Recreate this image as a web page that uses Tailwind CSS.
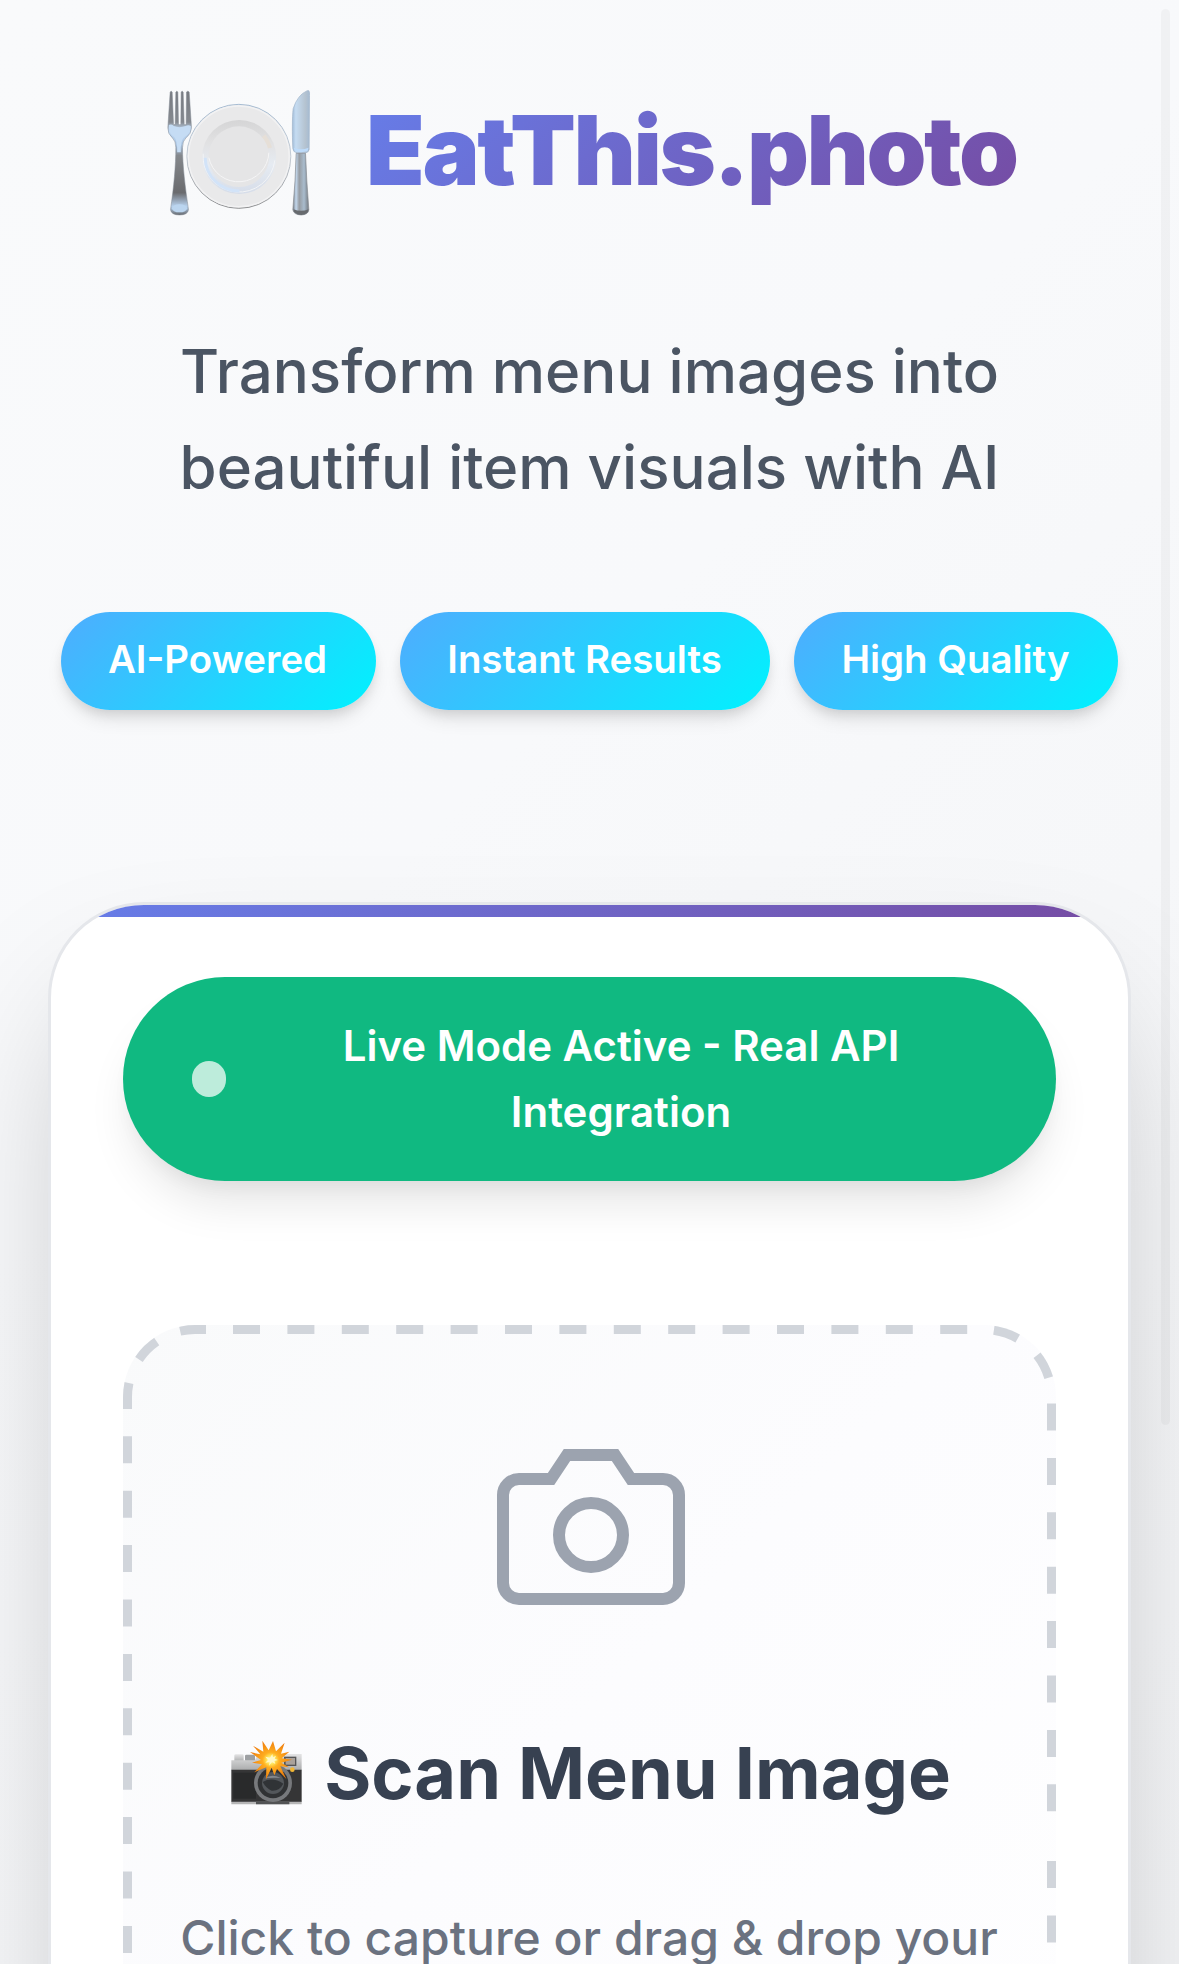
<!DOCTYPE html>
<html lang="en">
<head>
    <meta charset="utf-8"/>
    <meta content="width=device-width, initial-scale=1.0" name="viewport"/>
    <title>EatThis.photo</title>
    <script src="https://cdn.jsdelivr.net/npm/@tailwindcss/browser@4"></script>
</head>
<body class="h-[1964px] overflow-hidden font-['Inter',sans-serif] bg-[linear-gradient(135deg,#f9fafb_0%,#f8f9fb_40%,#f3f4f6_100%)]">
    <div class="h-[1964px] overflow-hidden px-12">
        <!-- Header -->
        <header class="h-[902px] pt-[87px] text-center">
            <div class="flex h-[130px] items-start pl-[118px]">
                <svg class="h-[130px] w-[147px] shrink-0" viewBox="80 50 440 390">
                    <defs>
                        <linearGradient id="fork" x1="0" y1="0" x2="0" y2="1">
                            <stop offset="0" stop-color="#777a80"/>
                            <stop offset=".25" stop-color="#85898f"/>
                            <stop offset=".32" stop-color="#c3dbf5"/>
                            <stop offset=".43" stop-color="#a9c4e2"/>
                            <stop offset=".52" stop-color="#85888c"/>
                            <stop offset=".82" stop-color="#6a6b6e"/>
                            <stop offset=".93" stop-color="#b8d2ee"/>
                            <stop offset="1" stop-color="#66696e"/>
                        </linearGradient>
                        <linearGradient id="blade" x1="0" y1="0" x2="1" y2="0">
                            <stop offset="0" stop-color="#a3bdd8"/>
                            <stop offset=".2" stop-color="#c5dcf2"/>
                            <stop offset=".75" stop-color="#b5c3d0"/>
                            <stop offset="1" stop-color="#a5bbd2"/>
                        </linearGradient>
                        <linearGradient id="handle" x1="0" y1="0" x2="1" y2="0">
                            <stop offset="0" stop-color="#777c83"/>
                            <stop offset=".2" stop-color="#c3d8ed"/>
                            <stop offset=".4" stop-color="#979ca2"/>
                            <stop offset=".7" stop-color="#a9bccd"/>
                            <stop offset="1" stop-color="#74797f"/>
                        </linearGradient>
                        <linearGradient id="rim" x1="0" y1="0" x2="0" y2="1">
                            <stop offset="0" stop-color="#d5d5d6"/>
                            <stop offset=".3" stop-color="#e1e1e2"/>
                            <stop offset=".6" stop-color="#e6ebf2"/>
                            <stop offset="1" stop-color="#d6dde9"/>
                        </linearGradient>
                        <linearGradient id="edge" x1="0" y1="0" x2="0" y2="1">
                            <stop offset="0" stop-color="#a5bbd2"/>
                            <stop offset=".5" stop-color="#c3cbd4"/>
                            <stop offset="1" stop-color="#8f9092"/>
                        </linearGradient>
                    </defs>
                    <path fill="url(#fork)" stroke="#808993" stroke-width="1.5" d="M92 65Q95 60 98 65L102 160Q103 168 107 160L109 65Q112 60 115 65L117 160Q120 168 124 160L125 65Q128 60 131 65L134 160Q138 168 140 160L141 65Q145 60 149 65L156 172Q156 190 139 203Q129 212 129 232C129 285 137 350 147 418Q145 434 120 434Q95 434 93 418C103 350 109 285 109 232Q109 212 99 203Q84 190 85 172Z"/>
                    <path fill="#c5dcf4" d="M88 164Q96 160 103 167Q120 174 138 167Q148 162 154 168Q154 188 135 200Q122 210 124 246H113Q114 210 104 200Q87 188 88 164Z"/>
                    <ellipse cx="120" cy="414" rx="23" ry="12" fill="#bbd5ef"/>
                    <circle cx="298" cy="258" r="156" fill="#e9e9ea" stroke="url(#edge)" stroke-width="3"/>
                    <circle cx="298" cy="258" r="151" fill="none" stroke="#f2f2f3" stroke-width="4"/>
                    <circle cx="299" cy="260" r="111" fill="url(#rim)"/>
                    <path d="M191 250A108 108 0 0 0 406 270" fill="none" stroke="#f3f4f6" stroke-width="3"/>
                    <path d="M197 262A102 102 0 0 0 300 362" fill="none" stroke="#d2e3f8" stroke-width="9"/>
                    <path d="M372 196A98 98 0 0 1 391 233" fill="none" stroke="#e6dfd7" stroke-width="14"/>
                    <circle cx="298" cy="259" r="91" fill="#e5e5e6"/>
                    <path d="M208 262A91 91 0 0 0 388 247" fill="none" stroke="#f5f5f6" stroke-width="3"/>
                    <path fill="url(#blade)" stroke="#9eb3ca" stroke-width="2" d="M508 61Q511 64 510 75L509 238Q507 247 496 248H474Q461 246 460 235C458 190 458 140 461 115Q474 74 503 61Z"/>
                    <path d="M463 232Q484 241 507 232L504 243Q484 248 467 243Z" fill="#bddbfa"/>
                    <path fill="url(#handle)" stroke="#85898f" stroke-width="2" d="M470 249H498Q501 330 508 418Q507 433 485 434Q462 433 460 418Q468 330 470 249Z"/>
                    <path fill="#676a6e" d="M462 417Q485 426 507 417Q507 433 485 434Q462 433 462 417Z"/>
                </svg>
                <h1 class="-mt-[9px] ml-[53px] bg-[linear-gradient(135deg,#667eea_0%,#764ba2_100%)] bg-clip-text text-[96px] leading-[144px] font-black tracking-[-2.4px] whitespace-nowrap text-transparent">EatThis.photo</h1>
            </div>
            <p class="mt-[106px] text-[60px] leading-[96px] font-medium text-[#4b5563]">Transform menu images into<br>beautiful item visuals with AI</p>
            <div class="mt-[97px] flex justify-center gap-6 text-[38.4px] leading-[94px] font-semibold whitespace-nowrap text-white">
                <span class="h-[98px] w-[315px] rounded-full bg-[linear-gradient(135deg,#4facfe_0%,#00f2fe_100%)] pr-[2px] shadow-[0_12px_18px_-3px_#0000001a,0_6px_12px_-3px_#0000001a]">AI-Powered</span>
                <span class="h-[98px] w-[370px] rounded-full bg-[linear-gradient(135deg,#4facfe_0%,#00f2fe_100%)] pr-px shadow-[0_12px_18px_-3px_#0000001a,0_6px_12px_-3px_#0000001a]">Instant Results</span>
                <span class="h-[98px] w-[324px] rounded-full bg-[linear-gradient(135deg,#4facfe_0%,#00f2fe_100%)] pr-px shadow-[0_12px_18px_-3px_#0000001a,0_6px_12px_-3px_#0000001a]">High Quality</span>
            </div>
        </header>

        <!-- Main card -->
        <main class="h-[1800px] overflow-hidden rounded-[96px] border-3 border-[#e5e7eb] bg-white shadow-[0_75px_150px_-36px_#00000040]">
            <div class="h-3 bg-[linear-gradient(135deg,#667eea_0%,#764ba2_100%)]"></div>
            <div class="px-[72px] pt-[60px]">
                <!-- Status -->
                <div class="flex h-[204px] items-center rounded-[102px] bg-[#10b981] px-[69px] text-center text-[42px] leading-[66px] font-semibold text-white shadow-[0_30px_45px_-9px_#0000001a,0_12px_18px_-6px_#0000000d]">
                    <span class="h-9 w-[34px] shrink-0 rounded-full bg-[#bdecdb]"></span>
                    <span class="ml-[29px] flex-1">Live Mode Active - Real API<br>Integration</span>
                </div>

                <!-- Upload area -->
                <div class="relative mt-36 h-[1200px] rounded-[72px] bg-[linear-gradient(135deg,#f9fafb_0%,#fcfcfe_40%,#ffffff_100%)] pt-[106px] text-center">
                    <!-- dashes run along the outer edge, the outer half is clipped away -->
                    <svg class="absolute inset-0 overflow-hidden rounded-[72px]" width="933" height="1200" fill="none" stroke="#d1d5db" stroke-width="18" stroke-dasharray="27 27.4">
                        <path d="M110 0H861A72 72 0 0 1 933 72V488"/>
                        <path d="M933 536V1128"/>
                        <path d="M83 0H72A72 72 0 0 0 0 72V1128"/>
                    </svg>
                    <svg class="mx-auto h-48 w-48 translate-x-[1px]" viewBox="0 0 24 24" fill="none" stroke="#9ca3af" stroke-width="1.5">
                        <path d="M23 19a2 2 0 0 1-2 2H3a2 2 0 0 1-2-2V8a2 2 0 0 1 2-2h4l2-3h6l2 3h4a2 2 0 0 1 2 2z"/>
                        <circle cx="12" cy="13" r="4"/>
                    </svg>
                    <h3 class="mt-[92px] flex items-center justify-center pl-[2px] text-[72px] leading-[115px] font-bold whitespace-nowrap text-[#374151]">
                        <svg class="mr-5 h-[66px] w-[74px]" viewBox="62 62 222 198">
                            <defs>
                                <linearGradient id="silver" x1="0" y1="0" x2="0" y2="1">
                                    <stop offset="0" stop-color="#e4e4e5"/>
                                    <stop offset="1" stop-color="#aaabac"/>
                                </linearGradient>
                                <radialGradient id="flash" cx=".5" cy=".5" r=".5">
                                    <stop offset="0" stop-color="#fffdf0"/>
                                    <stop offset=".2" stop-color="#ffe75d"/>
                                    <stop offset=".4" stop-color="#ffae20"/>
                                    <stop offset="1" stop-color="#ef7d0c"/>
                                </radialGradient>
                            </defs>
                            <rect x="75" y="105" width="28" height="22" rx="4" fill="url(#silver)"/>
                            <rect x="107" y="106" width="30" height="20" rx="4" fill="#9da0a3"/>
                            <path d="M66 123H137L145 104H277V153H66Z" fill="url(#silver)"/>
                            <path d="M66 151H277V248H66Z" fill="#353536"/>
                            <path d="M72 160H140V238H72Z" fill="#292a2b"/>
                            <path d="M66 247H277V255H66Z" fill="#b5b5b6"/>
                            <path d="M140 247H240V255H140Z" fill="#525355"/>
                            <rect x="224" y="112" width="37" height="28" fill="#565657"/>
                            <rect x="229" y="116" width="28" height="20" fill="#aaa29b"/>
                            <circle cx="191" cy="191" r="57" fill="#77797c"/>
                            <circle cx="191" cy="191" r="46" fill="#303234"/>
                            <circle cx="191" cy="191" r="33" fill="#53575b"/>
                            <path d="M160 188Q189 171 222 193Q210 216 187 214Q170 207 160 188Z" fill="#303336"/>
                            <path d="M166 177Q187 162 214 176Q190 174 166 177Z" fill="#85898e"/>
                            <circle cx="249" cy="151" r="7" fill="#f2b634"/>
                            <path fill="url(#flash)" d="M191 65L200 96L226 70L215 103L240 97L217 117L248 121L216 130L239 144L213 141L231 179L203 149L195 168L187 145L170 180L171 144L135 159L158 135L128 130L155 122L122 98L153 105L131 79L162 97L159 64L178 93Z"/>
                            <path fill="#fff8c7" d="M189 104L191 114L200 109L196 118L206 122L195 125L198 134L188 128L179 139L181 128L168 130L176 122L168 112L182 115Z"/>
                        </svg>
                        <span>Scan Menu Image</span>
                    </h3>
                    <p class="mt-[69px] pr-px text-[48px] leading-[77px] font-medium text-[#6b7280]">Click to capture or drag &amp; drop your</p>
                </div>
            </div>
        </main>
    </div>

    <!-- Scroll indicator -->
    <div class="absolute top-[9px] left-[1161px] h-[1416px] w-[9px] rounded-full bg-black/3"></div>
</body>
</html>
